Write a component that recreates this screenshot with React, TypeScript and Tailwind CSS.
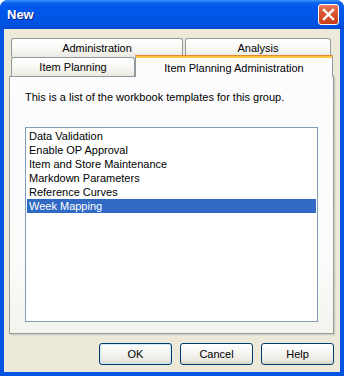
const items = [
  'Data Validation',
  'Enable OP Approval',
  'Item and Store Maintenance',
  'Markdown Parameters',
  'Reference Curves',
  'Week Mapping',
]

const tabClass =
  "h-[19px] border border-b-0 border-[#919b9c] rounded-t-[3px] bg-[linear-gradient(to_bottom,#ffffff,#f7f7f4_55%,#ebe9e0)] flex items-center justify-center leading-none"

const btnClass =
  "w-[73px] h-[22px] rounded-[3px] border border-[#003c74] bg-[linear-gradient(to_bottom,#ffffff,#f5f5f1_45%,#ebe9e1_80%,#d8d3c8)] flex items-center justify-center text-black"

export default function App() {
  return (
    <div className="w-[344px] h-[376px] bg-white">
      <div className="w-[344px] h-[376px] flex flex-col rounded-t-[8px] bg-[#0553e0] text-[11px] text-black font-['Liberation_Sans',Arial,sans-serif]">
        {/* title bar */}
        <div className="h-[29px] shrink-0 flex items-center justify-between pl-[7px] pr-[5px] rounded-t-[8px] bg-[linear-gradient(to_bottom,#3d95ff_0px,#0a62ea_3px,#0058ee_7px,#0055e6_18px,#0052e0_25px,#0648d2_29px)]">
          <span className="text-white font-bold text-[13px] [text-shadow:1px_1px_0_#0a1e8a]">New</span>
          <div className="w-[21px] h-[21px] rounded-[3px] border border-white bg-[linear-gradient(to_bottom,#e87a5c,#d9532f_45%,#c93d1b)] flex items-center justify-center">
            <svg width="13" height="13" viewBox="0 0 13 13">
              <path d="M2 2 L11 11 M11 2 L2 11" stroke="white" strokeWidth="2.4" strokeLinecap="square" />
            </svg>
          </div>
        </div>

        {/* client area */}
        <div className="flex-1 mx-[4px] mb-[4px] bg-[#ece9d8] flex flex-col pt-[9px] pl-[5px] pr-[6px]">
          {/* tab row 1 */}
          <div className="flex gap-[2px] ml-[2px]">
            <div className={`${tabClass} w-[172px]`}>Administration</div>
            <div className={`${tabClass} w-[146px]`}>Analysis</div>
          </div>
          {/* tab row 2 */}
          <div className="flex ml-[2px] -mt-[2px] h-[22px] relative z-10">
            <div className={`${tabClass} w-[124px] mt-[2px]`}>Item Planning</div>
            <div className="w-[198px] h-[22px] border-x border-[#919b9c] rounded-t-[3px] bg-[#fcfcfe] flex flex-col">
              <div className="h-[1px] bg-[#e68b2c] rounded-t-[2px] -mx-[1px]" />
              <div className="h-[2px] bg-[#ffc73c]" />
              <div className="flex-1 flex items-start justify-center pt-[2px]">Item Planning Administration</div>
            </div>
          </div>

          {/* tab panel */}
          <div className="-mt-[1px] h-[258px] border border-[#919b9c] bg-[linear-gradient(to_bottom,#fcfcfe,#fbfbfa_70%,#f4f3ee)] shadow-[1px_1px_0_#d0cdbf,2px_2px_0_#e2dfd2] pl-[15px] pt-[13px]">
            <p className="leading-[14px]">This is a list of the workbook templates for this group.</p>
            <div className="mt-[23px] w-[293px] h-[195px] border border-[#7f9db9] bg-white p-[1px]">
              {items.map((t, i) => (
                <div
                  key={t}
                  className={`h-[14px] leading-[14px] pl-[2px] ${i === items.length - 1 ? 'bg-[#316ac5] text-white' : ''}`}
                >
                  {t}
                </div>
              ))}
            </div>
          </div>

          {/* buttons */}
          <div className="mt-[9px] flex justify-end gap-[8px]">
            <div className={`${btnClass} shadow-[inset_0_0_0_1px_#cee7ff]`}>OK</div>
            <div className={btnClass}>Cancel</div>
            <div className={btnClass}>Help</div>
          </div>
        </div>
      </div>
    </div>
  )
}
